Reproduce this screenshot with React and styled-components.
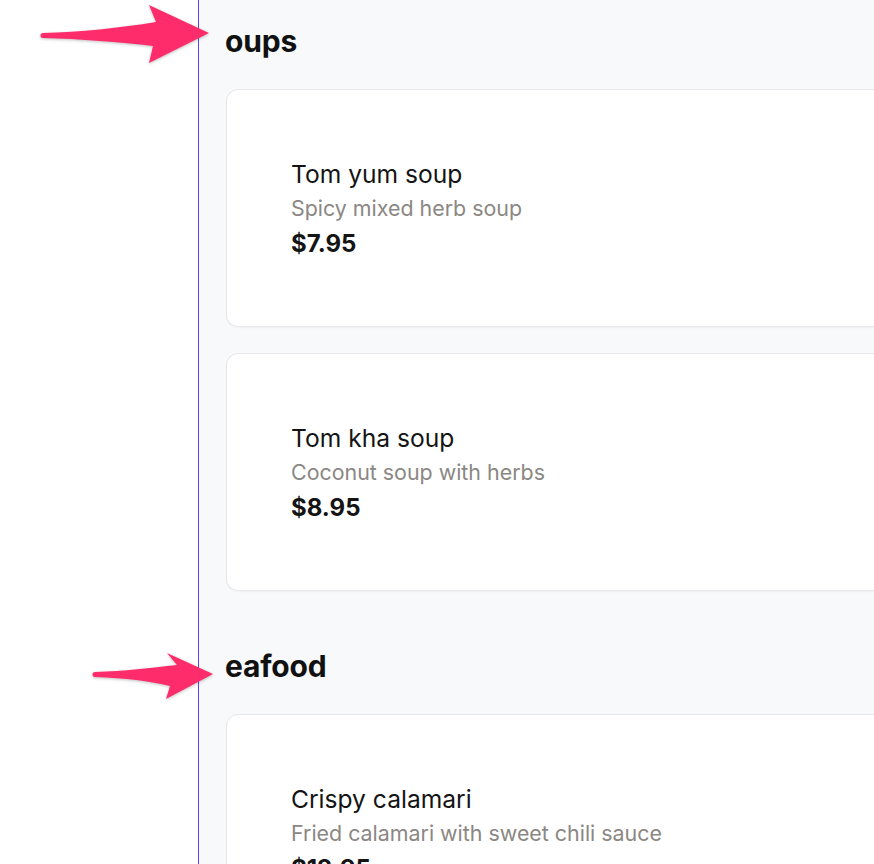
import styled, { createGlobalStyle } from 'styled-components';

const GlobalStyle = createGlobalStyle`
  html, body {
    margin: 0;
    padding: 0;
    overflow: hidden;
    background: #ffffff;
    font-family: Inter, "Noto Sans", sans-serif;
  }
`;

const Page = styled.div`
  position: relative;
  display: flex;
  min-height: 864px;
`;

const Sidebar = styled.aside`
  flex: 0 0 198px;
  background: #ffffff;
  border-right: 1px solid #5b40ee;
`;

const Main = styled.main`
  flex: 0 0 820px;
  background: #f8f9fa;
  padding: 23px 0 0 26px;
`;

const Section = styled.section`
  margin-bottom: 57px;
`;

const SectionTitle = styled.h2`
  margin: 0 0 30px;
  font-size: 30px;
  line-height: 36px;
  font-weight: 700;
  color: #111111;
  letter-spacing: -0.2px;
`;

const CardList = styled.div`
  display: flex;
  flex-direction: column;
  gap: 26px;
  padding-left: 1px;
`;

const Card = styled.div`
  height: 238px;
  box-sizing: border-box;
  display: flex;
  flex-direction: column;
  justify-content: center;
  padding: 2px 0 0 64px;
  background: #ffffff;
  border: 1px solid #e7e7e9;
  border-radius: 12px;
  box-shadow: 0 1px 2px rgba(0, 0, 0, 0.04);
`;

const ItemName = styled.div`
  font-size: 24.6px;
  line-height: 30px;
  color: #141414;
`;

const ItemDesc = styled.div`
  margin-top: 4px;
  font-size: 21.4px;
  line-height: 30px;
  color: #8b8783;
`;

const ItemPrice = styled.div`
  margin-top: 6px;
  font-size: 24px;
  line-height: 30px;
  font-weight: 700;
  color: #141414;
`;

const Overlay = styled.svg`
  position: absolute;
  left: 0;
  top: 0;
  pointer-events: none;
  filter: drop-shadow(0 1px 1.5px rgba(0, 0, 0, 0.25));
`;

const menu = [
  {
    title: 'oups',
    items: [
      { name: 'Tom yum soup', desc: 'Spicy mixed herb soup', price: '$7.95' },
      { name: 'Tom kha soup', desc: 'Coconut soup with herbs', price: '$8.95' },
    ],
  },
  {
    title: 'eafood',
    items: [
      { name: 'Crispy calamari', desc: 'Fried calamari with sweet chili sauce', price: '$12.95' },
    ],
  },
];

const Arrows = () => (
  <Overlay width="874" height="864" viewBox="0 0 874 864">
    <path
      fill="#fe2c6a"
      d="M43,33 C80,32 120,28 156,22 L149,5 L209,33 L149,63 L153,46 C120,42 80,39 43,38 A2.5,2.5 0 0 1 43,33 Z"
    />
    <path
      fill="#fe2c6a"
      d="M95,672 C125,671 150,668 177,665 L167,653 L213,674 L166,699 L170,686 C150,681 125,678 95,677 A2.5,2.5 0 0 1 95,672 Z"
    />
  </Overlay>
);

export default function App() {
  return (
    <>
      <GlobalStyle />
      <Page>
        <Sidebar />
        <Main>
          {menu.map((section) => (
            <Section key={section.title}>
              <SectionTitle>{section.title}</SectionTitle>
              <CardList>
                {section.items.map((item) => (
                  <Card key={item.name}>
                    <ItemName>{item.name}</ItemName>
                    <ItemDesc>{item.desc}</ItemDesc>
                    <ItemPrice>{item.price}</ItemPrice>
                  </Card>
                ))}
              </CardList>
            </Section>
          ))}
        </Main>
        <Arrows />
      </Page>
    </>
  );
}
